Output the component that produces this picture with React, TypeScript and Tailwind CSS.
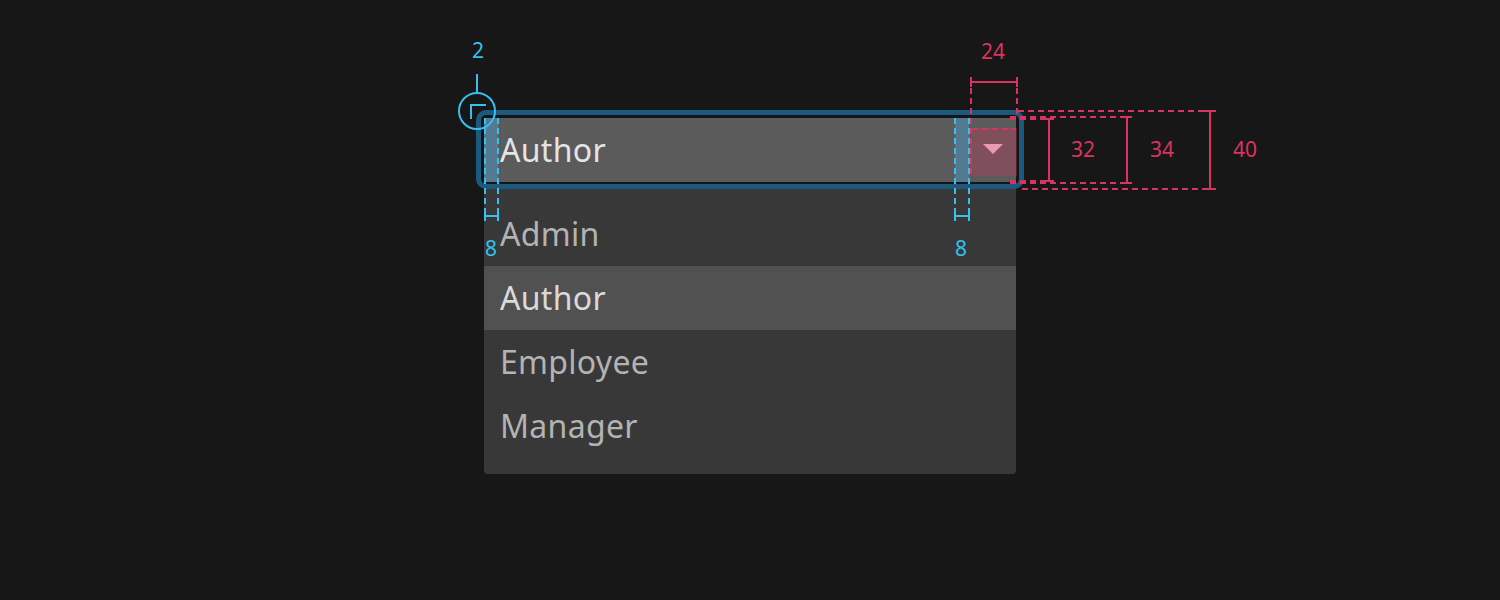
const blue = "#35c0f0";
const pink = "#d8345f";

const options = ["Admin", "Author", "Employee", "Manager"];

const Annotations = () => {
  return (
    <svg
      className="absolute left-0 top-0 z-20 pointer-events-none"
      width={1500}
      height={600}
      viewBox="0 0 1500 600"
    >
      {/* padding stripes */}
      <rect x={484} y={118} width={14} height={64} fill="#4c93bd" opacity={0.55} />
      <rect x={955} y={118} width={14} height={64} fill="#4c93bd" opacity={0.55} />
      {/* arrow button area */}
      <rect x={970} y={128} width={47} height={48} fill={pink} opacity={0.3} />

      <g stroke={blue} strokeWidth={2} fill="none">
        <line x1={477} y1={74} x2={477} y2={93} />
        <circle cx={477} cy={111} r={18} />
        <path d="M471 119 V105 H486" />
        <g strokeDasharray="6 4">
          <line x1={485} y1={118} x2={485} y2={212} />
          <line x1={498} y1={118} x2={498} y2={212} />
          <line x1={955} y1={118} x2={955} y2={212} />
          <line x1={969} y1={118} x2={969} y2={212} />
        </g>
        <path d="M485 211 V221 M485 216 H498 M498 211 V221" />
        <path d="M955 211 V221 M955 216 H969 M969 211 V221" />
      </g>

      <g stroke={pink} strokeWidth={2} fill="none">
        <path d="M971 77 V87 M971 82 H1017 M1017 77 V87" />
        <g strokeDasharray="6 4">
          <line x1={971} y1={88} x2={971} y2={176} />
          <line x1={1017} y1={88} x2={1017} y2={118} />
          <line x1={972} y1={129} x2={1016} y2={129} />
          <line x1={1018} y1={111} x2={1212} y2={111} />
          <line x1={1022} y1={189} x2={1212} y2={189} />
          <line x1={1010} y1={117} x2={1132} y2={117} />
          <line x1={1010} y1={183} x2={1132} y2={183} />
          <line x1={1010} y1={119} x2={1050} y2={119} />
          <line x1={1010} y1={181} x2={1050} y2={181} />
        </g>
        <path d="M1210 111 V189 M1204 111 H1216 M1204 189 H1216" />
        <path d="M1127 117 V183 M1122 117 H1132 M1122 183 H1132" />
        <path d="M1049 119 V181 M1044 119 H1054 M1044 181 H1054" />
      </g>

      <g fontFamily="'Noto Sans', sans-serif" fontSize={21} textAnchor="middle">
        <text x={478} y={58} fill={blue}>2</text>
        <text x={491} y={256} fill={blue}>8</text>
        <text x={961} y={256} fill={blue}>8</text>
        <text x={993} y={59} fill={pink}>24</text>
        <text x={1083} y={157} fill={pink}>32</text>
        <text x={1162} y={157} fill={pink}>34</text>
        <text x={1245} y={157} fill={pink}>40</text>
      </g>
    </svg>
  );
};

const App = () => {
  return (
    <div className="relative h-[600px] w-[1500px] overflow-hidden bg-[#171717] font-['Noto_Sans',sans-serif]">
      <div className="w-[532px] ml-[484px] pt-[118px]">
        <div className="relative z-10 flex h-[64px] items-center justify-between bg-[#5b5b5b] pl-4">
          <span className="text-[32px] leading-none tracking-[0.3px] text-[#e4e4e4]">Author</span>
          <div className="mt-[-2px] flex h-[48px] w-[46px] items-center justify-center">
            <svg width="22" height="12" viewBox="0 0 22 12">
              <path d="M1 1 H21 L11 11 Z" fill="#f2c6d3" />
            </svg>
          </div>
          <div className="absolute -left-[8px] -right-[8px] -top-[8px] -bottom-[7px] rounded-[10px] border-[5px] border-[#1b5a7e] shadow-[inset_0_0_0_2px_#141414]" />
        </div>
        <div className="rounded-b-[4px] bg-[#383838] pt-[20px] pb-[16px]">
          {options.map((o) => (
            <div
              key={o}
              className={
                o === "Author"
                  ? "flex h-[64px] items-center bg-[#515151] pl-4 text-[32px] tracking-[0.3px] text-[#dadada]"
                  : "flex h-[64px] items-center pl-4 text-[32px] tracking-[0.3px] text-[#b3b3b3]"
              }
            >
              {o}
            </div>
          ))}
        </div>
      </div>
      <Annotations />
    </div>
  );
};

export default App;
